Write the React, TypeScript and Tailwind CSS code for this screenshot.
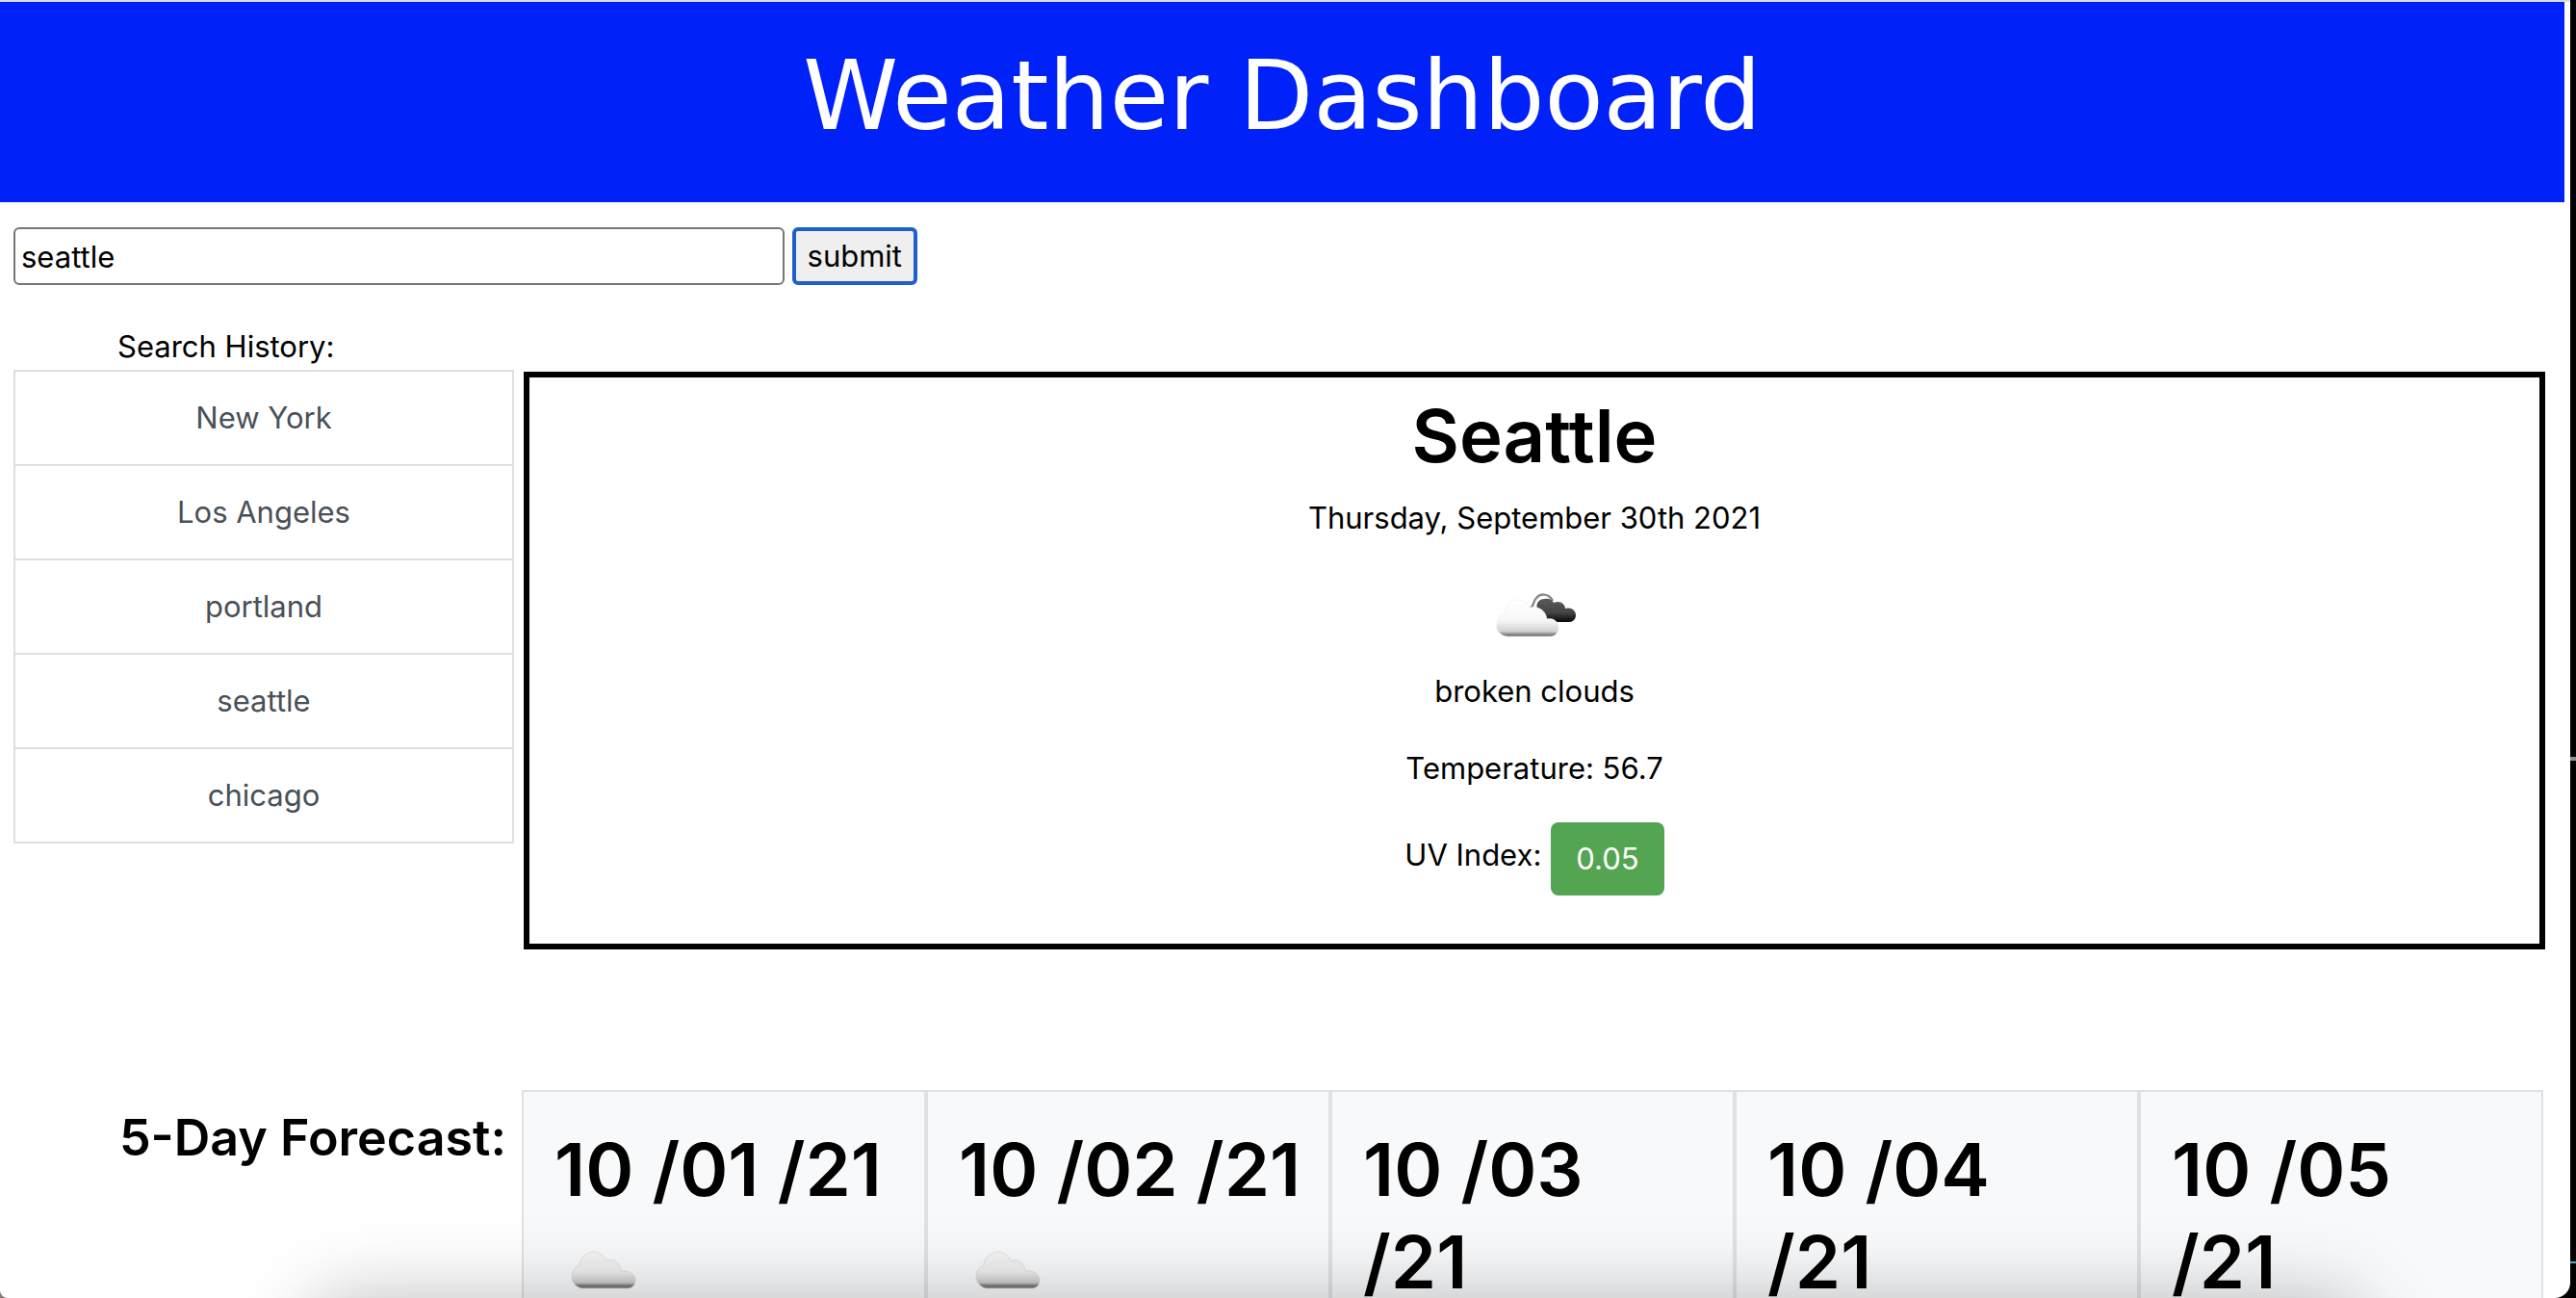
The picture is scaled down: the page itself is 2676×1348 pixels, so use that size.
import { useState } from "react";

const HISTORY = ["New York", "Los Angeles", "portland", "seattle", "chicago"];
const DAYS = [
  { lines: ["10 /01 /21"] },
  { lines: ["10 /02 /21"] },
  { lines: ["10 /03", "/21"] },
  { lines: ["10 /04", "/21"] },
  { lines: ["10 /05", "/21"] },
];

function BrokenClouds() {
  return (
    <svg className="mt-8 h-[100px] w-[100px]" viewBox="-1 5 100 100" role="img" aria-label="broken clouds">
      <defs>
        <linearGradient id="bc-dark" x1="0" y1="0" x2="0" y2="1">
          <stop offset="0" stopColor="#5a5a5a" />
          <stop offset="0.6" stopColor="#444" />
          <stop offset="1" stopColor="#050505" />
        </linearGradient>
        <linearGradient id="bc-light" x1="0" y1="0" x2="0" y2="1">
          <stop offset="0" stopColor="#fff" />
          <stop offset="0.55" stopColor="#f8f8f8" />
          <stop offset="0.86" stopColor="#d2d2d2" />
          <stop offset="0.94" stopColor="#8a8a8a" />
          <stop offset="1" stopColor="#6a6a6a" />
        </linearGradient>
        <filter id="bc-soft" x="-10%" y="-10%" width="120%" height="120%">
          <feGaussianBlur stdDeviation="0.7" />
        </filter>
      </defs>
      <g filter="url(#bc-soft)">
        <path d="M44 43 C49 41 47 36 51 32 C55 27 64 27 68 35" fill="none" stroke="#8a8a8a" strokeWidth="2.4" />
        <path d="M52 44 C50 37 54 33 59 33 C64 32 67 33 69 37 C75 34 81 38 81 43 C87 41 92 45 92 50 C92 54 89 57 85 57 H66 Z" fill="url(#bc-dark)" />
        <path d="M21 72 C13 71 8 65 10 58 C10 53 14 49 18 48 C19 39 25 34 32 34 C38 34 42 37 44 42 C53 40 61 45 62 54 C69 52 74 57 74 63 C74 68 70 72 66 72 Z" fill="url(#bc-light)" stroke="#ececec" strokeWidth="0.6" />
      </g>
    </svg>
  );
}

function Cloud() {
  return (
    <svg className="h-[100px] w-[100px]" viewBox="0 0 100 100" role="img" aria-label="cloudy">
      <defs>
        <linearGradient id="c-light" x1="0" y1="0" x2="0" y2="1">
          <stop offset="0" stopColor="#f4f4f4" />
          <stop offset="0.55" stopColor="#eeeeee" />
          <stop offset="0.84" stopColor="#cccccc" />
          <stop offset="0.93" stopColor="#787878" />
          <stop offset="1" stopColor="#6e6e6e" />
        </linearGradient>
        <filter id="c-soft" x="-10%" y="-10%" width="120%" height="120%">
          <feGaussianBlur stdDeviation="0.7" />
        </filter>
      </defs>
      <path
        filter="url(#c-soft)"
        d="M28 76 C20 74 16 66 19 59 C20 55 23 53 26 52 C26 45 33 38 41 38 C47 38 52 42 54 48 C60 44 68 49 69 58 C77 57 84 61 84 67 C84 72 82 75 77 76 Z"
        fill="url(#c-light)"
        stroke="#dadada"
        strokeWidth="0.8"
      />
    </svg>
  );
}

export default function App() {
  const [city, setCity] = useState("seattle");
  return (
    <div className="relative h-screen overflow-hidden bg-linear-to-r from-[#8a7570] from-50% to-black to-50% font-['Inter',sans-serif] text-[31px] leading-[48px] text-black">
      <div className="absolute top-[58.3%] right-0 h-1 w-1.5 bg-[#8f8f8f]" />
      <div className="absolute top-[97.2%] right-0 h-0.5 w-1.5 bg-[#58a5bf]" />
      <div className="relative mr-1.5 h-full overflow-hidden rounded-br-2xl rounded-bl-lg border-t-2 border-[#dcdcdc] bg-white">
        <header className="mr-1.5 h-[208px] bg-[#0022f8] pt-[38px] text-center">
          <h1 className="font-['DejaVu_Sans',sans-serif] text-[100px] leading-[120px] text-white">Weather Dashboard</h1>
        </header>

        <form className="flex gap-2 px-3.5 pt-[26px]" onSubmit={(e) => e.preventDefault()}>
          <input
            aria-label="City"
            value={city}
            onChange={(e) => setCity(e.target.value)}
            className="h-[60px] w-[30.3%] rounded-md border-2 border-[#767676] bg-white px-1.5"
          />
          <button type="submit" className="h-[60px] rounded-md border-4 border-[#1f5fc9] bg-[#efefef] px-3">
            submit
          </button>
        </form>

        <main className="pr-[26px] pl-3.5">
          <section className="flex gap-2.5 pt-10">
            <aside className="w-[520px] shrink-0">
              <h2 className="pl-27">Search History:</h2>
              <ul className="border-2 border-b-0 border-[#dfdfdf]">
                {HISTORY.map((name) => (
                  <li key={name} className="border-b-2 border-[#dfdfdf]">
                    <button type="button" className="h-24 w-full text-[#495057]">
                      {name}
                    </button>
                  </li>
                ))}
              </ul>
            </aside>

            <article className="mt-[50px] flex h-[600px] flex-1 flex-col items-center border-6 border-black pt-3">
              <h2 className="text-[76px] leading-[96px] font-semibold">Seattle</h2>
              <p className="mt-3.5">Thursday, September 30th 2021</p>
              <BrokenClouds />
              <p>broken clouds</p>
              <p className="mt-8">Temperature: 56.7</p>
              <p className="mt-8 flex gap-2.5">
                <span className="pt-2.5">UV Index:</span>
                <span className="rounded-lg bg-[#53a551] px-[26px] py-3.5 text-white">0.05</span>
              </p>
            </article>
          </section>

          <section className="flex gap-4 pt-[146px] pr-0.5">
            <h2 className="w-[512px] shrink-0 pt-4 text-right text-[52px] leading-[68px] font-semibold">5-Day Forecast:</h2>
            <div className="grid flex-1 grid-cols-5">
              {DAYS.map(({ lines }) => (
                <article key={lines[0]} className="min-w-0 border-2 border-[#dee2e6] bg-[#f8f9fa] px-8 pt-8">
                  <h3 className="text-[76px] leading-[96px] font-semibold">
                    {lines.map((line) => (
                      <span key={line} className="block whitespace-nowrap">
                        {line}
                      </span>
                    ))}
                  </h3>
                  <Cloud />
                </article>
              ))}
            </div>
          </section>
        </main>

        <div className="pointer-events-none absolute top-full right-[8%] left-[12%] h-40 rounded-[40px] shadow-[0_0_80px_rgba(0,0,0,0.26)]" />
      </div>
    </div>
  );
}
